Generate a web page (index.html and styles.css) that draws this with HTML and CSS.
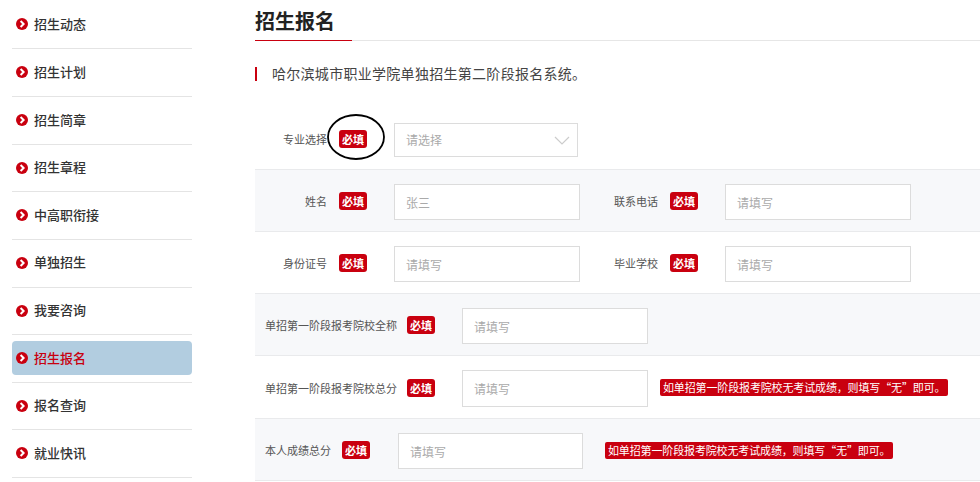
FILE: index.html
```html
<!DOCTYPE html>
<html lang="zh-CN">
<head>
<meta charset="utf-8">
<title>招生报名</title>
<link rel="stylesheet" href="styles.css">
</head>
<body>
<svg class="defs" width="0" height="0" aria-hidden="true"><symbol id="go" viewBox="0 0 12 12"><circle cx="6" cy="6" r="6" fill="#c9000f"/><path d="M4.6 3 7.6 6 4.6 9" fill="none" stroke="#fff" stroke-width="2"/></symbol></svg>
<div class="page">
  <nav class="side">
    <div class="item"><a class="link"><svg class="dot"><use href="#go"/></svg>招生动态</a></div>
    <div class="item"><a class="link"><svg class="dot"><use href="#go"/></svg>招生计划</a></div>
    <div class="item"><a class="link"><svg class="dot"><use href="#go"/></svg>招生简章</a></div>
    <div class="item"><a class="link"><svg class="dot"><use href="#go"/></svg>招生章程</a></div>
    <div class="item"><a class="link"><svg class="dot"><use href="#go"/></svg>中高职衔接</a></div>
    <div class="item"><a class="link"><svg class="dot"><use href="#go"/></svg>单独招生</a></div>
    <div class="item"><a class="link"><svg class="dot"><use href="#go"/></svg>我要咨询</a></div>
    <div class="item"><a class="link active"><svg class="dot"><use href="#go"/></svg>招生报名</a></div>
    <div class="item"><a class="link"><svg class="dot"><use href="#go"/></svg>报名查询</a></div>
    <div class="item"><a class="link"><svg class="dot"><use href="#go"/></svg>就业快讯</a></div>
  </nav>
  <main class="main">
    <h1 class="head"><span class="head-text">招生报名</span></h1>
    <p class="intro">哈尔滨城市职业学院单独招生第二阶段报名系统。</p>
    <form class="form">
      <div class="row first">
        <label class="lab">专业选择</label><span class="must">必填</span>
        <div class="select"><span class="ph">请选择</span><svg class="chev" viewBox="0 0 16 9"><path d="M1 1 8 8 15 1" fill="none" stroke="#ccc" stroke-width="1.2"/></svg></div>
        <svg class="circle" viewBox="0 0 58 46"><ellipse cx="29" cy="23" rx="28" ry="22" fill="none" stroke="#000" stroke-width="1.8"/></svg>
      </div>
      <div class="row alt">
        <label class="lab">姓名</label><span class="must">必填</span><input class="inp" placeholder="张三">
        <label class="lab lab2">联系电话</label><span class="must">必填</span><input class="inp" placeholder="请填写">
      </div>
      <div class="row">
        <label class="lab">身份证号</label><span class="must">必填</span><input class="inp" placeholder="请填写">
        <label class="lab lab2">毕业学校</label><span class="must">必填</span><input class="inp" placeholder="请填写">
      </div>
      <div class="row alt">
        <label class="lab free">单招第一阶段报考院校全称</label><span class="must">必填</span><input class="inp" placeholder="请填写">
      </div>
      <div class="row high">
        <label class="lab free">单招第一阶段报考院校总分</label><span class="must">必填</span><input class="inp tall" placeholder="请填写"><span class="note">如单招第一阶段报考院校无考试成绩，则填写“无”即可。</span>
      </div>
      <div class="row alt self">
        <label class="lab free">本人成绩总分</label><span class="must">必填</span><input class="inp" placeholder="请填写"><span class="note">如单招第一阶段报考院校无考试成绩，则填写“无”即可。</span>
      </div>
    </form>
  </main>
</div>
</body>
</html>
```
FILE: styles.css
```css
* { box-sizing: border-box; }
html, body { margin: 0; height: 482px; overflow: hidden; background: #fff; }
body { font-family: "Noto Sans CJK SC", "Liberation Sans", sans-serif; color: #333; }
.defs { position: absolute; }
.page { display: flex; align-items: flex-start; }
.side { width: 180px; margin-left: 12px; flex: none; }
.item { height: 47.63px; padding-top: 6px; border-bottom: 1px solid #e4e4e4; }
.item:first-child { height: 49.4px; padding-top: 7px; }
.link { display: flex; align-items: center; height: 34px; padding: 0 0 2px 4px; font-size: 13px; font-weight: 500; color: #333; border-radius: 4px; }
.link.active { background: #b2cde0; color: #c9000f; }
.dot { width: 12px; height: 12px; margin: 2px 6px 0 0; flex: none; }
.main { flex: 1; min-width: 0; margin-left: 63px; }
.head { margin: 0; height: 41px; font-size: 20px; line-height: 40px; font-weight: 700; color: #222; border-bottom: 1px solid #e6e6e6; }
.head-text { display: inline-block; width: 97px; height: 41px; line-height: 41px; border-bottom: 1px solid #c9000f; }
.intro { display: flex; align-items: center; height: 14px; margin: 26px 0 0; padding: 0 0 2px 15px; border-left: 2px solid #c9000f; font-size: 14px; letter-spacing: .29px; color: #444; white-space: nowrap; }
.form { margin-top: 15px; }
.row { position: relative; display: flex; align-items: center; height: 62px; padding-top: 3px; border-bottom: 1px solid #e9eaec; font-size: 11px; }
.row.first { height: 74px; padding-top: 15px; }
.row.high { height: 63px; }
.row.alt { background: #f7f8fa; }
.lab { width: 72px; margin: 0 12px 2px 0; text-align: right; color: #555; flex: none; }
.lab.free { width: auto; margin: 0 10px 2px 10px; text-align: left; }
.self .lab.free { margin-right: 11px; }
.lab.lab2 { width: 78px; padding-left: 13px; margin: 0 12px 2px 0; }
.must { width: 28px; height: 18px; margin: 0 27px 2px 0; flex: none; border-radius: 3px; background: #c9000f; color: #fff; font-size: 11px; font-weight: 700; line-height: 18px; text-align: center; }
.self .must { margin-right: 28px; }
.inp { width: 186px; height: 36px; padding: 0 11px; flex: none; border: 1px solid #dcdcdc; background: #fff; font: 12px "Noto Sans CJK SC", sans-serif; outline: none; }
.self .inp { width: 185px; }
.inp.tall { height: 37px; }
.inp::placeholder { color: #aaa; opacity: 1; }
.select { display: flex; align-items: center; justify-content: space-between; width: 184px; height: 34px; padding: 0 7px 0 11px; flex: none; border: 1px solid #dcdcdc; background: #fff; font-size: 12px; color: #aaa; }
.ph { margin-bottom: 2px; }
.chev { width: 16px; height: 9px; }
.circle { position: absolute; left: 72px; top: 18px; width: 58px; height: 46px; }
.note { height: 17px; margin: 0 0 2px 12px; padding: 0 3px; flex: none; border-radius: 2px; background: #c9000f; color: #fff; font-size: 11px; letter-spacing: -.14px; line-height: 17px; white-space: nowrap; }
.self .note { margin-left: 22px; }
```
